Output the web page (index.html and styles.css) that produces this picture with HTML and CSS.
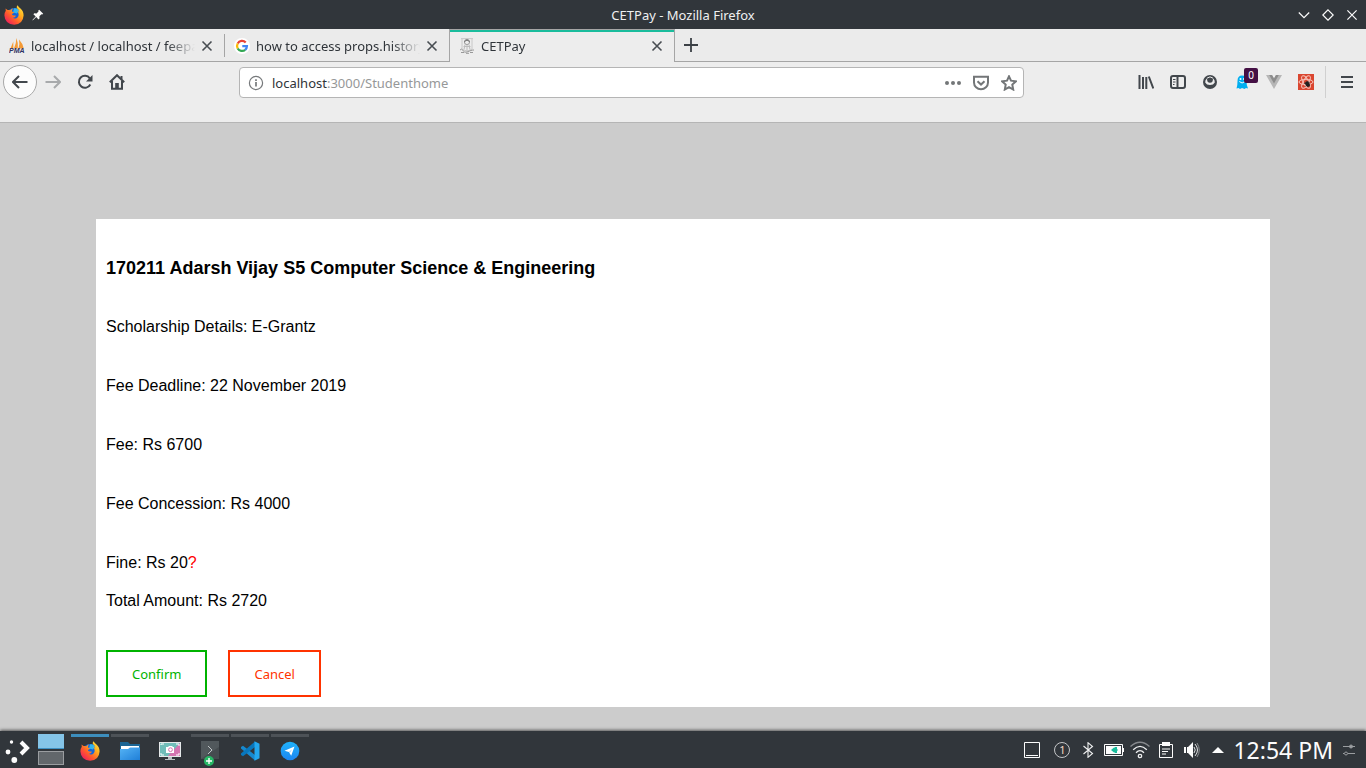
FILE: index.html
```html
<!DOCTYPE html>
<html lang="en">
<head>
<meta charset="utf-8">
<title>CETPay</title>
<link rel="stylesheet" href="styles.css">
</head>
<body>
<svg class="defs" aria-hidden="true">
  <defs>
    <linearGradient id="fox-body" x1="1" y1="0" x2="0.1" y2="1">
      <stop offset="0" stop-color="#fff04a"/><stop offset=".35" stop-color="#ffb01f"/><stop offset=".65" stop-color="#ff5a2c"/><stop offset="1" stop-color="#e8106a"/>
    </linearGradient>
    <linearGradient id="folder-front" x1="0" y1="0" x2="1" y2="1"><stop offset="0" stop-color="#55b3f5"/><stop offset="1" stop-color="#1f7fd8"/></linearGradient>
    <linearGradient id="telegram" x1="0" y1="0" x2="0" y2="1"><stop offset="0" stop-color="#1fb2fa"/><stop offset="1" stop-color="#1c86f2"/></linearGradient>
    <symbol id="firefox" viewBox="0 0 20 20">
      <circle cx="10" cy="10.500" r="7.500" fill="#1565d8"/>
      <path d="M10 3.500c2-.6 4 0 5 2l-2 3-4-1z" fill="#32b5f0"/>
      <path d="M1.500 3.500Q2.500 4 3.600 5.100Q5 4.700 6.300 5.200Q7.500 3.700 9 3.600Q7.700 5 8 6.500L10 7.200Q9.700 8.500 7.900 9Q7.800 10.300 9.600 10.600Q10.700 10.300 12 10.800Q10.700 12.900 8.500 12.600Q10.500 14.400 13 12.900Q15.500 11 14.200 7.600Q13.900 6.500 13 5.800Q14.500 6 15.100 6.900Q14.800 4 12.800 2.900Q12.400 1.400 13.600 .3Q14.500 2 16.500 3.400Q19.600 6 19.600 10.500Q19 19.200 10.200 19.800Q1 19.300 .4 10.500Q.4 7.500 1.800 5.700Z" fill="url(#fox-body)"/>
    </symbol>
    <symbol id="close" viewBox="0 0 12 12"><path d="M1.500 1.500l9 9m0-9l-9 9" fill="none" stroke="#484d52" stroke-width="1.600"/></symbol>
  </defs>
</svg>

<header class="titlebar">
  <div class="titlebar-side">
    <svg class="i20" viewBox="0 0 20 20"><use href="#firefox"/></svg>
    <button class="bare" aria-label="Keep above"><svg class="i12" viewBox="0 0 12 12"><path d="M7.200.8l4 4-1 .7-.8-.2-2 2 .1 2.200-1 .9-2.300-2.300-3 2.900-.8.4.4-.8 2.900-3L1.400 5.300l.9-1 2.200.1 2-2-.2-.8z" fill="#fcfcfc"/></svg></button>
  </div>
  <div class="window-title">CETPay - Mozilla Firefox</div>
  <div class="titlebar-side window-controls">
    <button class="bare" aria-label="Minimize"><svg class="i12" viewBox="0 0 12 12"><path d="M.8 3.500L6 8.700l5.200-5.200"/></svg></button>
    <button class="bare" aria-label="Maximize"><svg class="i12" viewBox="0 0 12 12"><path d="M6 .8L11.200 6 6 11.200.8 6z"/></svg></button>
    <button class="bare" aria-label="Close"><svg class="i12" viewBox="0 0 12 12"><path d="M1.400 1.400l9.200 9.200m0-9.200l-9.200 9.200"/></svg></button>
  </div>
</header>

<div class="tabs">
  <div class="tab">
    <svg class="i16" viewBox="0 0 16 16"><path d="M1.500 10.500L4.300 3.500V10.500zM5 10.500Q7.500 5 7.300 0Q9.500 5 8.800 10.500zM9.500 10.500Q11 6 10 1.500Q13.500 5 14.800 10.500z" fill="#f49a35"/><text x="0" y="15" class="pma">PMA</text></svg>
    <span class="tab-label">localhost / localhost / feepay</span>
    <button class="bare" aria-label="Close tab"><svg class="i12"><use href="#close"/></svg></button>
  </div>
  <div class="tab tab-after">
    <svg class="i16" viewBox="0 0 16 16"><circle cx="8" cy="8" r="8" fill="#fff"/><g fill="none" stroke-width="2.300"><path d="M11.700 4.500A5 5 0 0 0 3.700 5.500" stroke="#ea4335"/><path d="M3.700 5.500A5 5 0 0 0 3.700 10.500" stroke="#fbbc05"/><path d="M3.700 10.500A5 5 0 0 0 11.200 11.800" stroke="#34a853"/><path d="M11.200 11.800A5 5 0 0 0 12.900 8.200H8.300" stroke="#4285f4"/></g></svg>
    <span class="tab-label">how to access props.history</span>
    <button class="bare" aria-label="Close tab"><svg class="i12"><use href="#close"/></svg></button>
  </div>
  <div class="tab tab-active">
    <svg class="i16" viewBox="0 0 16 16" fill="none" stroke="#999" stroke-width="1"><path d="M2 .6h12M3 1v10.500Q8 14.500 13 11.500V1" stroke="#c8c8c8"/><circle cx="8" cy="4" r="2.600"/><path d="M5.500 3.500Q8 .5 10.500 3.500" stroke="#666"/><path d="M4.500 8.500h7M6 6.500l-1 5m5-5l1 5M8 6.500v6" stroke="#bbb"/><path d="M1 12q1.500-2 3 .5T8 14t4-1.500 3-.5M2 14.500h3m2 .8h3m1-.8h3"/></svg>
    <span class="tab-label">CETPay</span>
    <button class="bare" aria-label="Close tab"><svg class="i12"><use href="#close"/></svg></button>
  </div>
  <div class="tab-rest">
    <button class="bare" aria-label="New tab"><svg class="i14" viewBox="0 0 14 14"><path d="M7 0v14M0 7h14" stroke="#3b4045" stroke-width="1.800"/></svg></button>
  </div>
</div>

<nav class="toolbar">
  <div class="tools">
    <button class="tool tool-back" aria-label="Back"><span class="back"><svg class="i16" viewBox="0 0 16 16"><path d="M15.500 8H1.500M7 2L1 8l6 6"/></svg></span></button>
    <button class="tool faded" aria-label="Forward"><svg class="i16" viewBox="0 0 16 16"><path d="M.5 8h14M9 2l6 6-6 6"/></svg></button>
    <button class="tool" aria-label="Reload"><svg class="i16" viewBox="0 0 16 16"><path d="M13.300 10.500A6 6 0 1 1 12.800 4.300"/><path d="M15.500 1v6.500H9z" fill="#42474c" stroke="none"/></svg></button>
    <button class="tool" aria-label="Home"><svg class="i16" viewBox="0 0 16 16"><path d="M.8 8.200L8 1.200l7.200 7M3 7v7.800h10V7"/><path d="M6.200 14.500V9h3.600v5.500z" fill="#42474c" stroke="none"/><path d="M12.500 2v3"/></svg></button>
  </div>
  <div class="spring"></div>
  <div class="address">
    <svg class="i16" viewBox="0 0 16 16" fill="none" stroke="#76797b"><circle cx="8" cy="8" r="6.600" stroke-width="1.200"/><path d="M8 7v4.500M8 4.200V6" stroke-width="1.700"/></svg>
    <label class="host" for="url">localhost</label><input id="url" type="text" value=":3000/Studenthome">
    <button class="page-action" aria-label="Page actions"><svg class="i16" viewBox="0 0 16 16" fill="#737678"><circle cx="2" cy="8" r="2"/><circle cx="8" cy="8" r="2"/><circle cx="14" cy="8" r="2"/></svg></button>
    <button class="page-action" aria-label="Save to Pocket"><svg class="i16" viewBox="0 0 16 16"><path d="M1 1.800h14v5.700a7 6.800 0 0 1-14 0z"/><path d="M4.500 6.300L8 9.600l3.500-3.300"/></svg></button>
    <button class="page-action" aria-label="Bookmark"><svg class="i16" viewBox="0 0 16 16"><path d="M8 1.300l2 4.400 4.900.6-3.600 3.300.9 4.900L8 12.100l-4.200 2.400.9-4.900L1.100 6.300 6 5.700z"/></svg></button>
  </div>
  <div class="spring"></div>
  <div class="tools">
    <button class="tool" aria-label="Library"><svg class="i16" viewBox="0 0 16 16"><path d="M1.500 1v14M5 3v12M8.300 3v12M10.800 2.500L15.300 14.500"/></svg></button>
    <button class="tool" aria-label="Sidebars"><svg class="i16" viewBox="0 0 16 16"><rect x="1" y="2" width="14" height="12" rx="2"/><path d="M7.500 2v12"/><path d="M3 5.500h2.500M3 8h2.500M3 10.500h1.500" stroke-width="1"/></svg></button>
    <button class="tool" aria-label="Account"><svg class="i16" viewBox="0 0 16 16"><circle cx="8" cy="8" r="7" fill="#42474c" stroke="none"/><path d="M3.200 8.500A4.900 4.900 0 0 1 5 4.200Q4.800 8.800 8 8.800T11 4.200A4.900 4.900 0 0 1 12.800 8.500Q11.500 11 8 11T3.200 8.500z" fill="#ededed" stroke="none"/><path d="M5 4.200Q8 1.500 11 4.200" stroke="#ededed" stroke-width="1"/></svg></button>
    <button class="tool" aria-label="Ghostery"><svg class="i16" viewBox="0 0 16 16"><path d="M2.500 14.500Q3.500 12 3.500 7Q3.500 1.500 8 1.500T12.500 7Q12.500 12 14 14.500l-2-.5-1.500 1L8 14l-2 1-1.500-1z" fill="#00aef0" stroke="none"/><circle cx="6.500" cy="5" r="1" fill="#fff" stroke="none"/><circle cx="10" cy="5" r="1" fill="#fff" stroke="none"/><path d="M5.300 7.500Q8 10.500 11 7.500" stroke="#fff" stroke-width="1"/></svg><span class="badge">0</span></button>
    <button class="tool" aria-label="Vue devtools"><svg class="i16" viewBox="0 0 16 16"><path d="M0 1h6l2 3.500L10 1h6L8 15z" fill="#b7b7b7" stroke="none"/><path d="M3.200 1H6l2 3.500L10 1h2.800L8 9.500z" fill="#8c8c8c" stroke="none"/></svg></button>
    <button class="tool" aria-label="React devtools"><svg class="i16" viewBox="0 0 16 16"><path fill="#da4630" stroke="none" d="M0 0h16v16H0z"/><g class="orbit"><ellipse cx="8" cy="8" rx="7" ry="2.700"/><ellipse cx="8" cy="8" rx="7" ry="2.700" transform="rotate(60 8 8)"/><ellipse cx="8" cy="8" rx="7" ry="2.700" transform="rotate(120 8 8)"/></g><ellipse cx="9.500" cy="10" rx="2" ry="2.800" fill="#222" stroke="none" transform="rotate(-35 9.500 10)"/><path d="M6 9l6 3M7.500 12.500l4-4M10 7v6" stroke="#222" stroke-width=".8"/></svg></button>
  </div>
  <div class="menu-box"><button class="tool" aria-label="Menu"><svg class="i16" viewBox="0 0 16 16"><path d="M2 3h12M2 8h12M2 13h12"/></svg></button></div>
</nav>

<main class="page">
  <section class="card">
    <h3>170211 Adarsh Vijay S5 Computer Science &amp; Engineering</h3>
    <p>Scholarship Details: E-Grantz</p>
    <p>Fee Deadline: 22 November 2019</p>
    <p>Fee: Rs 6700</p>
    <p>Fee Concession: Rs 4000</p>
    <p class="fine">Fine: Rs 20<span class="hint">?</span></p>
    <p class="total">Total Amount: Rs 2720</p>
    <div class="actions">
      <button class="action confirm">Confirm</button>
      <button class="action cancel">Cancel</button>
    </div>
  </section>
</main>

<footer class="panel">
  <button class="bare launcher" aria-label="Application launcher"><svg class="i26" viewBox="0 0 26 26"><g fill="#fcfcfc"><circle cx="7.500" cy="5" r="1.700"/><circle cx="4" cy="15" r="2.400"/><circle cx="10.300" cy="23" r="2.900"/></g><path d="M17 5l6 6-6 6" fill="none" stroke="#fcfcfc" stroke-width="4"/></svg></button>
  <div class="pager"><button class="desk desk-on" aria-label="Desktop 1"></button><button class="desk" aria-label="Desktop 2"></button></div>
  <div class="tasks">
    <button class="task running current" aria-label="Firefox"><svg class="i20" viewBox="0 0 20 20"><use href="#firefox"/></svg></button>
    <button class="task running" aria-label="Files"><svg class="i20" viewBox="0 0 20 20"><path d="M0 1h8l2 2h10v8H0z" fill="#1c6594"/><path d="M1 5h18v5H1z" fill="#fff"/><path d="M0 8h8l2-1.500h10V19H0z" fill="url(#folder-front)"/></svg></button>
    <button class="task" aria-label="Screenshot"><svg class="i22" viewBox="0 0 22 22"><path d="M0 2h22v15H0z" fill="#e5e9ea"/><path d="M1 3h20v13H1z" fill="#70bdb9"/><path d="M21 3v13H9z" fill="#d574b1"/><path d="M2 5V4h3M17 4h3v2M2 13v2h3m12 0h3v-2" fill="none" stroke="#fff"/><path d="M7 7h2l1-1h3l1 1h1v6H7z" fill="#fff"/><circle cx="11.500" cy="9.700" r="1.900" fill="none" stroke="#d574b1"/><path d="M9 17h4v2h3v1H6v-1h3z" fill="#b9bfc2"/></svg></button>
    <button class="task running" aria-label="Terminal"><svg class="i22" viewBox="0 0 22 22"><path d="M2 1h18v18H2z" fill="#51585c"/><path d="M2 19L20 7v12z" fill="#454b4f"/><path d="M9 6l4 4-4 4" fill="none" stroke="#bfc4c6"/></svg><span class="plus"><svg class="i10" viewBox="0 0 10 10"><circle cx="5" cy="5" r="5" fill="#27b765"/><path d="M5 2v6M2 5h6" stroke="#fff" stroke-width="1.400"/></svg></span></button>
    <button class="task running" aria-label="Code"><svg class="i20" viewBox="0 0 20 20"><path d="M1 6l2-1.300L15 14v5.500L1 7.500z" fill="#1689cf"/><path d="M1 14l2 1.300L15 6V.5L1 12.500z" fill="#0877bd"/><path d="M14.500.3l5 2.400v14.600l-5 2.400z" fill="#24a8ee"/></svg></button>
    <button class="task running" aria-label="Telegram"><svg class="i20" viewBox="0 0 20 20"><circle cx="10" cy="10" r="9.300" fill="url(#telegram)"/><path d="M4.500 9.800L14.500 5.500l-3.300 9.300-2.300-3.700z" fill="#fff"/><path d="M8.900 11.100l3.300-3-2.500 4.200z" fill="#a8d5f7"/></svg></button>
  </div>
  <div class="tray">
    <button class="bare show" aria-label="Show desktop"><svg class="i16" viewBox="0 0 16 16" fill="none" stroke="#fcfcfc"><path d="M.5.500h15v15H.5zM2 13.500h12"/></svg></button>
    <button class="bare tray-item"><span class="count">1</span></button>
    <button class="bare tray-item" aria-label="Bluetooth"><svg class="i16" viewBox="0 0 16 16" fill="none" stroke="#eff0f1" stroke-width="1.100"><path d="M3.500 4l9 7.500L8 15.300V.7l4.500 3.800-9 7.500"/></svg></button>
    <button class="bare tray-item" aria-label="Battery"><svg class="i20" viewBox="0 0 20 20"><path d="M.5 4.500h18v11H.5z" fill="none" stroke="#fcfcfc"/><path d="M2 6h15v8H2zM19 8h1v4h-1z" fill="#fcfcfc"/><path d="M7 10l3-2.500h1V7h2v2h1v.5h-1v1h1v.5h-1v2h-2v-.5h-1z" fill="#1abc9c"/></svg></button>
    <button class="bare tray-item" aria-label="Wi-Fi"><svg class="i20" viewBox="0 0 20 20" fill="none" stroke="#eff0f1" stroke-width="1.300"><path d="M.5 6.500Q10-2 19.500 6.500" opacity=".45"/><path d="M3.200 9.800Q10 3 16.800 9.800M6 12.700Q10 8.500 14 12.700"/><circle cx="10" cy="16" r="1.700"/></svg></button>
    <button class="bare tray-item" aria-label="Clipboard"><svg class="i16" viewBox="0 0 16 16"><path d="M1.500 2.500h13v13h-13z" fill="none" stroke="#fcfcfc"/><path d="M4 0h8v4H4z" fill="#fcfcfc"/><path d="M4 7h8M4 9.500h6M4 12h4" stroke="#fcfcfc"/></svg></button>
    <button class="bare tray-item" aria-label="Volume"><svg class="i16" viewBox="0 0 16 16"><path d="M0 5h2v6H0zM3 5h1l5-5v16l-5-5H3z" fill="#fcfcfc"/><path d="M10 5q2.500 3 0 6m1-9q5 6 0 12" fill="none" stroke="#dfe1e2"/><path d="M13 1q4.500 7 0 14" fill="none" stroke="#8a8e91"/></svg></button>
    <button class="bare tray-item" aria-label="Hidden items"><svg class="i12" viewBox="0 0 12 12"><path d="M0 9l6-6 6 6z" fill="#fcfcfc"/></svg></button>
    <time class="clock">12:54 PM</time>
    <button class="bare" aria-label="Panel settings"><svg class="i12" viewBox="0 0 12 12" fill="none" stroke="#9a9da0"><path d="M0 2.500h12M0 9.500h1m4 0h7"/><circle cx="8" cy="2.500" r="1.500" fill="#9a9da0"/><circle cx="3" cy="9.500" r="1.500"/></svg></button>
  </div>
</footer>
</body>
</html>
```
FILE: styles.css
```css
* { box-sizing: border-box; }

body {
  margin: 0;
  height: 100vh;
  display: flex;
  flex-direction: column;
  background: #ccc;
  color: #2f3439;
  font: 13px/18px "Noto Sans", sans-serif;
}

svg { display: block; flex: none; }
.defs { position: absolute; width: 0; height: 0; }
.i10 { width: 10px; height: 10px; }
.i12 { width: 12px; height: 12px; }
.i14 { width: 14px; height: 14px; }
.i16 { width: 16px; height: 16px; }
.i20 { width: 20px; height: 20px; }
.i22 { width: 22px; height: 22px; }
.i26 { width: 26px; height: 26px; }

button { font: inherit; color: inherit; cursor: pointer; }
.bare, .tool, .page-action, .task {
  display: flex;
  align-items: center;
  justify-content: center;
  padding: 0;
  border: 0;
  background: none;
}

/* Window title */
.titlebar {
  flex: none;
  display: flex;
  align-items: center;
  height: 29px;
  padding: 0 8px 0 4px;
  background: #31363b;
  color: #eff0f1;
}
.titlebar-side { flex: 1; display: flex; align-items: center; gap: 8px; }
.window-title { padding-left: 4px; }
.window-controls { justify-content: flex-end; gap: 12px; }
.window-controls path { fill: none; stroke: #fcfcfc; stroke-width: 1.2; }

/* Tabs */
.tabs { flex: none; display: flex; height: 33px; background: #ebebeb; }
.tab {
  position: relative;
  flex: 0 1 225px;
  min-width: 0;
  display: flex;
  align-items: center;
  gap: 6px;
  padding: 2px 12px 0 9px;
  border-bottom: 1px solid #a5a5a5;
}
.tab-label {
  flex: 1;
  min-width: 0;
  overflow: hidden;
  white-space: nowrap;
  mask-image: linear-gradient(to right, #000 calc(100% - 28px), transparent);
}
.tab-after::before {
  content: "";
  position: absolute;
  left: -1px;
  top: 5px;
  bottom: 4px;
  width: 1px;
  background: #a5a5a5;
}
.tab-active {
  flex-basis: 226px;
  margin-left: -1px;
  padding: 0 11px 0 9px;
  border: solid #a5a5a5;
  border-width: 1px 1px 0;
  background: #ededed;
  box-shadow: inset 0 2px #1abc9c;
}
.tab-rest {
  flex: 1;
  display: flex;
  align-items: center;
  padding-left: 9px;
  border-bottom: 1px solid #a5a5a5;
}
.pma { font: italic 700 7px "Liberation Sans", sans-serif; fill: #2f3162; }

/* Toolbar */
.toolbar {
  flex: none;
  display: flex;
  align-items: flex-start;
  height: 61px;
  padding: 4px 3px 0;
  border-bottom: 1px solid #b5b5b5;
  background: #ededed;
}
.tools { flex: none; display: flex; }
.tool { position: relative; width: 32px; height: 32px; }
.tool-back { width: 34px; }
.tool svg { fill: none; stroke: #42474c; stroke-width: 2; }
.tool .orbit { stroke: #f7c4bb; stroke-width: 1; }
.faded { opacity: .4; }
.back {
  flex: none;
  display: flex;
  align-items: center;
  justify-content: center;
  width: 34px;
  height: 34px;
  border: 1px solid #a8a8a8;
  border-radius: 50%;
  background: #fcfcfc;
}
.spring { flex: 106; }
.address {
  flex: 775;
  display: flex;
  align-items: center;
  height: 31px;
  margin-top: 1px;
  padding: 0 0 0 8px;
  border: 1px solid #b5b5b5;
  border-radius: 4px;
  background: #fff;
}
.host { margin-left: 8px; }
.address input {
  flex: 1;
  min-width: 0;
  padding: 0;
  border: 0;
  outline: 0;
  background: none;
  color: #969899;
  font: inherit;
}
.page-action { width: 28px; height: 28px; }
.page-action path { fill: none; stroke: #737678; stroke-width: 2; }
.badge {
  position: absolute;
  right: 0;
  top: 2px;
  width: 14px;
  height: 15px;
  border-radius: 2px;
  background: #440f44;
  color: #fff;
  font-size: 10px;
  line-height: 15px;
}
.menu-box { flex: none; margin-left: 3px; padding-left: 5px; border-left: 1px solid #d0d0d0; }

/* Fee summary */
.page {
  flex: 1;
  min-height: 0;
  overflow: auto;
  padding: 96px 96px 24px;
  color: #000;
  font: 16px/18px "Liberation Sans", Arial, sans-serif;
}
.card { padding: 38px 10px 10px; background: #fff; }
.card h3 { margin: 0 0 39px; font-size: 18px; line-height: 22px; }
.card p { margin: 0 0 41px; }
.card .fine { margin-bottom: 20px; }
.card .total { margin-bottom: 40px; }
.hint { color: #f00; }
.actions { display: flex; gap: 21px; }
.action {
  padding: 13px 24px 12px;
  border: 2px solid;
  background: #fff;
  font: 13px/18px "Noto Sans", sans-serif;
}
.confirm { color: #00b300; }
.cancel { color: #ff3300; }

/* Desktop panel */
.panel {
  position: relative;
  flex: none;
  display: flex;
  align-items: center;
  height: 37px;
  padding: 0 11px 0 4px;
  background: #31363b;
  box-shadow: 0 -1px 3px #555;
}
.launcher { margin-right: 8px; }
.pager { display: flex; flex-direction: column; gap: 2px; margin-right: 7px; }
.desk { width: 26px; height: 14px; padding: 0; border: 1px solid #9a9da0; background: #62676b; }
.desk-on { height: 15px; border: solid #3f92c4; border-width: 0 0 1px; background: #85c5e8; }
.tasks { align-self: stretch; display: flex; gap: 2px; padding-top: 3px; }
.task { position: relative; width: 38px; border-top: 3px solid transparent; padding-bottom: 4px; }
.running { border-color: #4d5257; }
.current { border-color: #3d8ebd; }
.plus { position: absolute; left: 13px; bottom: 2px; }
.tray { flex: 1; display: flex; align-items: center; justify-content: flex-end; }
.tray-item { width: 26px; }
.show { width: 34px; }
.count {
  width: 16px;
  height: 16px;
  border: 1px solid #c4c6c8;
  border-radius: 50%;
  color: #f4d9c4;
  font-size: 11px;
  line-height: 14px;
}
.clock { padding: 0 10px 0 2px; color: #fcfcfc; font-size: 23px; line-height: 36px; }
```
